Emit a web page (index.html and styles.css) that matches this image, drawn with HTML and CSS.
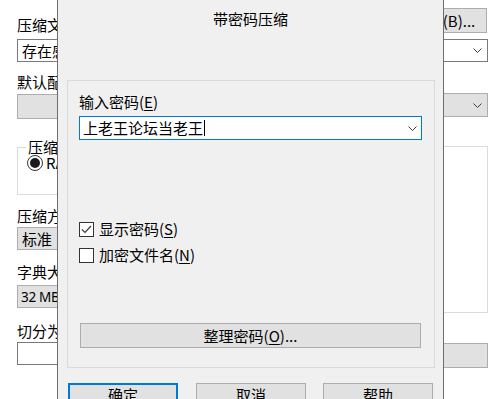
FILE: index.html
```html
<!DOCTYPE html>
<html lang="zh-CN">
<head>
<meta charset="utf-8">
<title>带密码压缩</title>
<link rel="stylesheet" href="styles.css">
</head>
<body>
<div class="win">
  <div class="row r1">
    <span class="lbl l1">压缩文件名(<u>A</u>)</span>
    <div class="btn browse">浏览(B)...</div>
  </div>
  <div class="combo white c-name"><span>存在感.rar</span><svg class="chev" width="9" height="5" viewBox="0 0 9 5"><path d="M0.5 0.5 L4.5 4.5 L8.5 0.5" fill="none" stroke="#3c3c3c" stroke-width="1"/></svg></div>
  <span class="lbl l3">默认配置</span>
  <div class="row r4">
    <div class="btn cfg">配置(F)...</div>
    <div class="combo gray c-upd"><span>添加并替换文件</span><svg class="chev" width="9" height="5" viewBox="0 0 9 5"><path d="M0.5 0.5 L4.5 4.5 L8.5 0.5" fill="none" stroke="#3c3c3c" stroke-width="1"/></svg></div>
  </div>
  <div class="cols">
    <div class="col left">
      <div class="group g-fmt">
        <span class="legend">压缩文件格式</span>
        <div class="radio-row"><span class="radio"><span class="dot"></span></span><span>RAR</span></div>
      </div>
      <span class="lbl m1">压缩方式(C)</span>
      <div class="combo gray c-std"><span>标准</span></div>
      <span class="lbl m2">字典大小(I)</span>
      <div class="combo gray c-dict"><span class="lat">32 MB</span></div>
      <span class="lbl m3">切分为分卷(V)，大小</span>
      <div class="combo white c-vol"></div>
    </div>
    <div class="col right">
      <div class="group g-opt"><span class="legend">压缩选项</span></div>
      <div class="btn setpw">设置密码(P)...</div>
    </div>
  </div>
</div>

<div class="dialog">
  <div class="title">带密码压缩</div>
  <div class="panel">
    <div class="plabel">输入密码(<u>E</u>)</div>
    <div class="pinput">
      <span class="ptext">上老王论坛当老王</span><span class="caret"></span>
      <svg class="chev" width="9" height="5" viewBox="0 0 9 5"><path d="M0.5 0.5 L4.5 4.5 L8.5 0.5" fill="none" stroke="#3c3c3c" stroke-width="1"/></svg>
    </div>
    <div class="chk c1">
      <span class="box"><svg width="13" height="13" viewBox="0 0 13 13"><path d="M2 6.5 L5 9.5 L11 3" fill="none" stroke="#3a3a3a" stroke-width="1.2"/></svg></span>
      <span>显示密码(<u>S</u>)</span>
    </div>
    <div class="chk c2">
      <span class="box"></span>
      <span>加密文件名(<u>N</u>)</span>
    </div>
    <div class="btn manage">整理密码(<u>O</u>)...</div>
  </div>
  <div class="actions">
    <div class="btn act ok">确定</div>
    <div class="btn act">取消</div>
    <div class="btn act">帮助</div>
  </div>
</div>
</body>
</html>
```
FILE: styles.css
```css
* { box-sizing: border-box; }
html, body { margin: 0; padding: 0; }
body {
  width: 503px;
  height: 399px;
  overflow: hidden;
  position: relative;
  background: #ffffff;
  color: #000;
  font: 15px/20px "Noto Sans CJK SC", sans-serif;
}
u { text-decoration: underline; text-underline-offset: 2px; }

.win {
  padding: 8px 15px 0 17px;
  display: flex;
  flex-direction: column;
}
.row { display: flex; justify-content: space-between; align-items: flex-start; }
.lbl { display: block; white-space: nowrap; height: 20px; }
.l1 { margin-top: 7px; }
.r1 { height: 25px; }

.btn {
  background: #e1e1e1;
  border: 1px solid #adadad;
  height: 25px;
  display: flex;
  align-items: center;
  justify-content: center;
  white-space: nowrap;
}
.browse { width: 86px; margin-right: 1px; }

.combo {
  height: 23px;
  border: 1px solid #7a7a7a;
  display: flex;
  align-items: center;
  justify-content: space-between;
  padding: 0 5px 0 4px;
  white-space: nowrap;
}
.combo.white { background: #fff; }
.combo.gray { background: #e1e1e1; border-color: #adadad; }
.c-name { margin-top: 6px; }
.l3 { margin-top: 10px; }
.r4 { margin-top: 1px; height: 25px; }
.cfg { width: 200px; margin-top: 1px; }
.c-upd { width: 238px; height: 24px; }

.cols { display: grid; grid-template-columns: 200px 237px; justify-content: space-between; }
.col { display: flex; flex-direction: column; }

.group { border: 1px solid #dcdcdc; }
.legend {
  display: block;
  width: max-content;
  margin: -11px 0 0 8px;
  padding: 0 2px;
  background: #fff;
  height: 20px;
}
.g-fmt { margin-top: 29px; height: 48px; }
.radio-row { display: flex; align-items: center; gap: 3px; margin: -4px 0 0 9px; }
.radio {
  width: 16px; height: 16px; border-radius: 50%;
  border: 1px solid #333; background: #fff;
  display: flex; align-items: center; justify-content: center;
}
.dot { width: 10px; height: 10px; border-radius: 50%; background: #1a1a1a; }

.m1 { margin-top: 11px; }
.c-std { margin-top: 1px; }
.m2 { margin-top: 12px; }
.c-dict { margin-top: 3px; padding-left: 3px; }
.lat { font-family: "Noto Sans", sans-serif; font-size: 13.5px; letter-spacing: -0.3px; }
.m3 { margin-top: 13px; }
.c-vol { margin-top: 1px; }

.g-opt { margin-top: 28px; height: 167px; }
.setpw { margin-top: 30px; }

.dialog {
  position: absolute;
  left: 57px;
  top: 0;
  width: 387px;
  height: 430px;
  background: #f0f0f0;
  border-left: 1px solid #6e6e6e;
  border-right: 1px solid #6e6e6e;
  display: flex;
  flex-direction: column;
}
.title {
  height: 80px;
  padding-top: 9px;
  text-align: center;
}
.panel {
  margin-left: 9px;
  width: 368px;
  height: 288px;
  border: 1px solid #dadada;
  padding: 11px 0 0 11px;
  display: flex;
  flex-direction: column;
  flex: none;
}
.plabel { height: 20px; white-space: nowrap; }
.pinput {
  margin-top: 4px;
  width: 343px;
  height: 24px;
  background: #fff;
  border: 1px solid #0078d7;
  display: flex;
  align-items: center;
  padding: 0 4px 0 3px;
}
.ptext { white-space: nowrap; }
.caret { width: 1px; height: 16px; background: #000; margin-left: 1px; }
.pinput .chev { margin-left: auto; }

.chk { display: flex; align-items: center; height: 20px; gap: 5px; white-space: nowrap; }
.c1 { margin-top: 79px; }
.c2 { margin-top: 6px; }
.box {
  width: 15px; height: 15px;
  border: 1px solid #333;
  background: #fff;
  display: flex; align-items: center; justify-content: center;
}
.manage { margin: 58px 0 0 1px; width: 341px; }

.actions { display: flex; margin: 15px 0 0 10px; gap: 18px; }
.act { width: 110px; align-items: flex-start; padding-top: 1px; }
.act + .act + .act { margin-left: -1px; }
.ok { border: 2px solid #0078d7; padding-top: 0; }
```
